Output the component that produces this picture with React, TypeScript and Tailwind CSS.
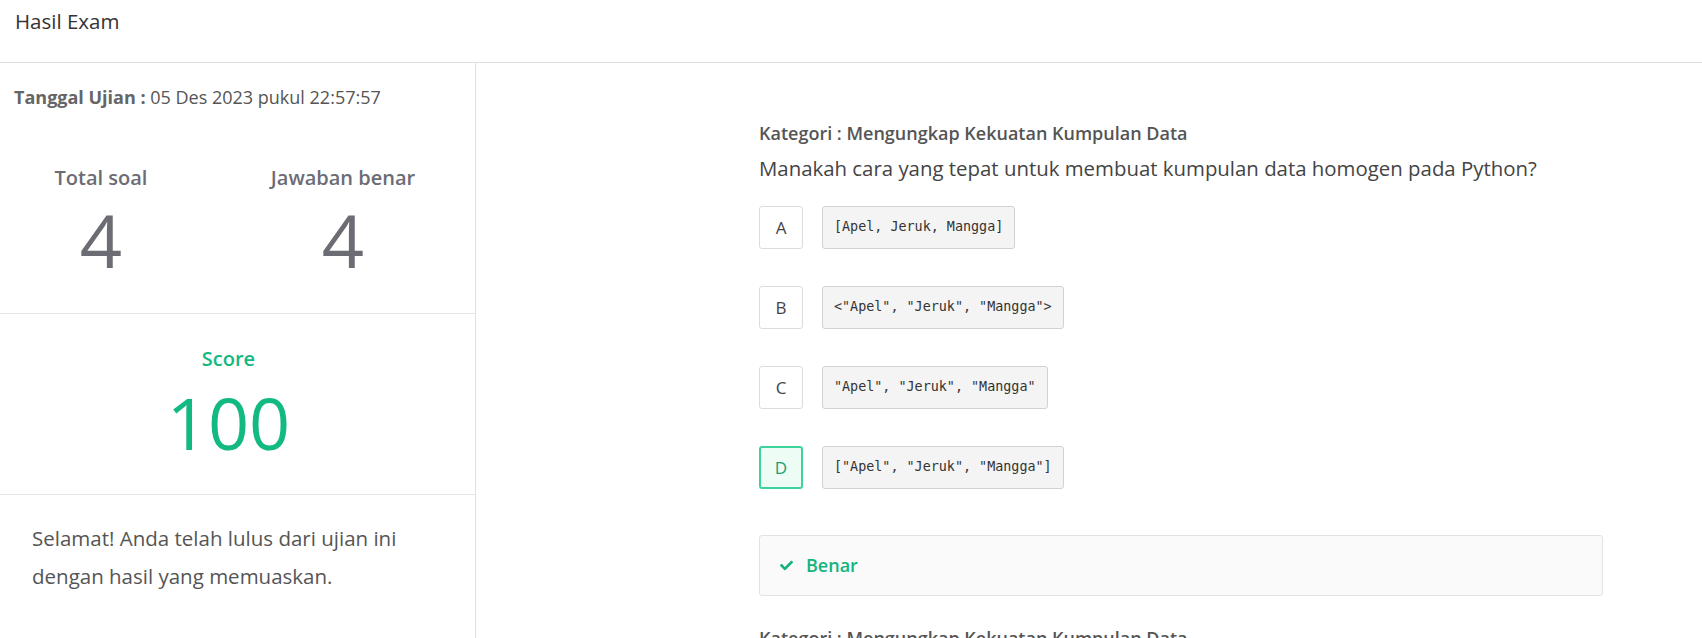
import React from "react";
import { FaCheck } from "react-icons/fa";

const options = [
  { key: "A", text: "[Apel, Jeruk, Mangga]" },
  { key: "B", text: '<"Apel", "Jeruk", "Mangga">' },
  { key: "C", text: '"Apel", "Jeruk", "Mangga"' },
  { key: "D", text: '["Apel", "Jeruk", "Mangga"]', correct: true },
];

const Question = () => {
  return (
    <div className="w-[844px] mb-[30px]">
      <p className="text-[18px] leading-[24px] font-semibold text-[#555]">
        Kategori : Mengungkap Kekuatan Kumpulan Data
      </p>
      <p className="mt-[8px] text-[20.4px] leading-[30px] text-[#444]">
        Manakah cara yang tepat untuk membuat kumpulan data homogen pada Python?
      </p>
      <ul className="mt-[23px] flex flex-col gap-[37px]">
        {options.map((o) => (
          <li key={o.key} className="flex items-center gap-[19px]">
            <span
              className={
                o.correct
                  ? "w-[44px] h-[43px] flex items-center justify-center rounded-[3px] border-2 border-[#3dd39b] bg-[#edfcf5] text-[17px] text-[#19a072]"
                  : "w-[44px] h-[43px] flex items-center justify-center rounded-[3px] border border-[#dcdcdc] bg-white text-[17px] text-[#444]"
              }
            >
              {o.key}
            </span>
            <code className="h-[43px] flex items-center px-[11px] rounded-[3px] border border-[#d2d2d2] bg-[#f4f4f4] text-[13.4px] text-[#333] font-['DejaVu_Sans_Mono',monospace]">
              {o.text}
            </code>
          </li>
        ))}
      </ul>
      <div className="mt-[46px] h-[61px] flex items-center gap-[13px] px-[20px] rounded-[3px] border border-[#e2e2e2] bg-[#fafafa]">
        <FaCheck className="text-[#14b47d] w-[13px] h-[13px]" />
        <span className="text-[18px] font-semibold text-[#14b47d]">Benar</span>
      </div>
    </div>
  );
};

export default function App() {
  return (
    <div className="h-screen flex flex-col overflow-hidden bg-white font-['Open_Sans',sans-serif]">
      <header className="h-[63px] shrink-0 border-b border-[#dedee3] px-[15px] pt-[11px]">
        <h1 className="text-[20.5px] leading-[20px] font-medium text-[#333]">Hasil Exam</h1>
      </header>

      <div className="flex flex-1 min-h-0">
        {/* ringkasan */}
        <aside className="w-[476px] shrink-0 border-r border-[#e0e0e0] flex flex-col">
          <section className="h-[251px] border-b border-[#e3e3e3] pt-[21px]">
            <p className="px-[14px] text-[18px] leading-[26px] text-[#555]">
              <span className="font-bold text-[#666]">Tanggal Ujian :</span> 05 Des 2023 pukul 22:57:57
            </p>
            <div className="mt-[54px] flex">
              <div className="w-[202px] shrink-0 flex flex-col items-center">
                <span className="text-[20px] leading-[28px] font-semibold text-[#6c6c74]">Total soal</span>
                <span className="mt-[11px] text-[74px] leading-none text-[#6c6c74]">4</span>
              </div>
              <div className="ml-[9px] w-[264px] shrink-0 flex flex-col items-center">
                <span className="text-[20px] leading-[28px] font-semibold text-[#6c6c74]">Jawaban benar</span>
                <span className="mt-[11px] text-[74px] leading-none text-[#6c6c74]">4</span>
              </div>
            </div>
          </section>

          <section className="h-[181px] border-b border-[#e3e3e3] pt-[31px] pr-[18px] flex flex-col items-center">
            <span className="text-[20px] leading-[28px] font-semibold text-[#13b982]">Score</span>
            <span className="mt-[13px] text-[72px] leading-none text-[#13b982]">100</span>
          </section>

          <section className="pt-[24px] px-[32px]">
            <p className="text-[20.5px] leading-[38px] text-[#555]">
              Selamat! Anda telah lulus dari ujian ini dengan hasil yang memuaskan.
            </p>
          </section>
        </aside>

        {/* pembahasan */}
        <main className="flex-1 overflow-hidden pl-[283px] pt-[58px]">
          <Question />
          <Question />
        </main>
      </div>
    </div>
  );
}
